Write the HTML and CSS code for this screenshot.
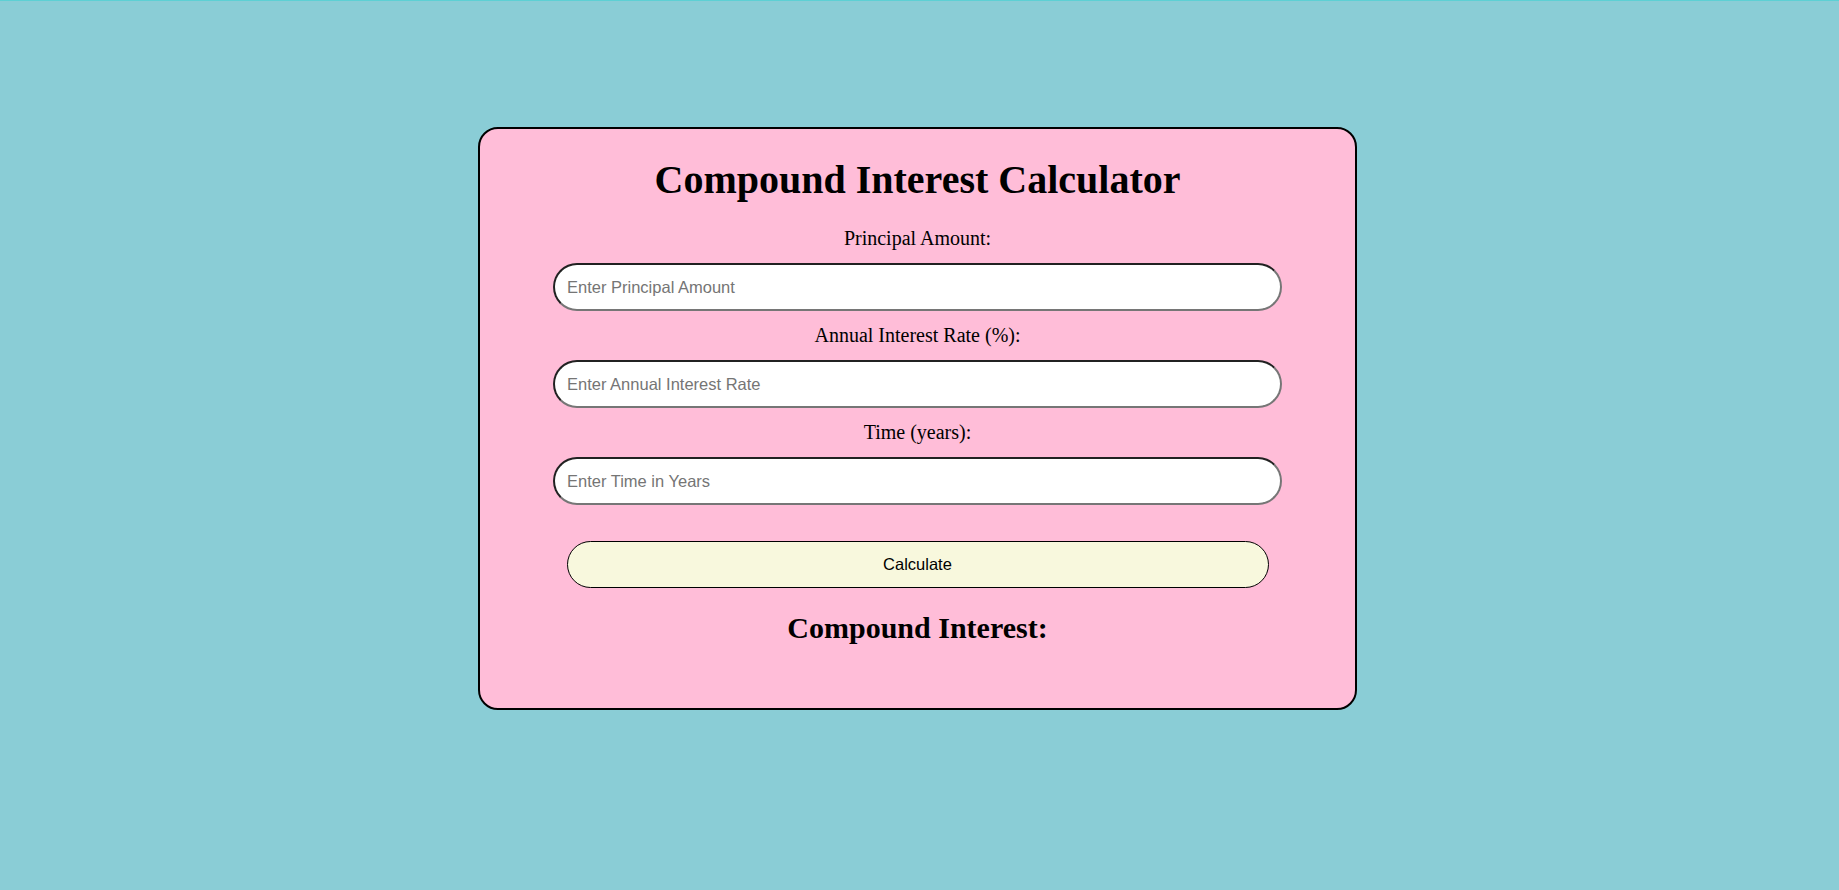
FILE: index.html
```html
<!DOCTYPE html>
<html lang="en">
<head>
<meta charset="UTF-8">
<title>Compound Interest Calculator</title>
<link rel="stylesheet" href="styles.css">
</head>
<body>
  <div class="page">
    <div class="card">
      <h1 class="title">Compound Interest Calculator</h1>
      <form class="form">
        <label class="label" for="principal">Principal Amount:</label>
        <input class="field" type="number" id="principal" placeholder="Enter Principal Amount">
        <label class="label" for="rate">Annual Interest Rate (%):</label>
        <input class="field" type="number" id="rate" placeholder="Enter Annual Interest Rate">
        <label class="label" for="time">Time (years):</label>
        <input class="field" type="number" id="time" placeholder="Enter Time in Years">
        <button class="btn" type="button">Calculate</button>
      </form>
      <h2 class="result">Compound Interest:</h2>
    </div>
  </div>
</body>
</html>
```

FILE: styles.css
```css
html {
  border-top: 1px solid #5dd0d4;
  background: #8acdd6;
}
body {
  margin: 0;
  background: #8acdd6;
  font-family: "Liberation Serif", "Times New Roman", serif;
  color: #000;
}
.page {
  display: flex;
  justify-content: center;
  padding: 126px 4px 0 0;
}
.card {
  box-sizing: border-box;
  width: 879px;
  height: 583px;
  background: #ffbdd8;
  border: 2px solid #000;
  border-radius: 20px;
  padding-top: 28px;
  display: flex;
  flex-direction: column;
  align-items: center;
}
.title {
  margin: 0;
  font-size: 40px;
  line-height: 46px;
  font-weight: bold;
  text-align: center;
}
.form {
  display: flex;
  flex-direction: column;
  align-items: center;
  width: 100%;
  margin-top: 24px;
}
.label {
  display: block;
  font-size: 20px;
  line-height: 23px;
  margin-bottom: 13px;
}
.field {
  box-sizing: border-box;
  width: 729px;
  height: 48px;
  border: 2px inset #767676;
  border-radius: 24px;
  background: #fff;
  padding: 0 12px;
  font-family: "Liberation Sans", Arial, sans-serif;
  font-size: 16.5px;
  margin: 0 0 13px;
  outline: none;
}
.field::placeholder {
  color: #757575;
}
.field:last-of-type {
  margin-bottom: 0;
}
.btn {
  box-sizing: border-box;
  width: 702px;
  height: 47px;
  margin-top: 36px;
  border: 1px solid #000;
  border-radius: 24px;
  background: #f8f8dd;
  font-family: "Liberation Sans", Arial, sans-serif;
  font-size: 16.5px;
  color: #000;
}
.result {
  margin: 22px 0 0;
  font-size: 30px;
  line-height: 35px;
  font-weight: bold;
  text-align: center;
}
```
